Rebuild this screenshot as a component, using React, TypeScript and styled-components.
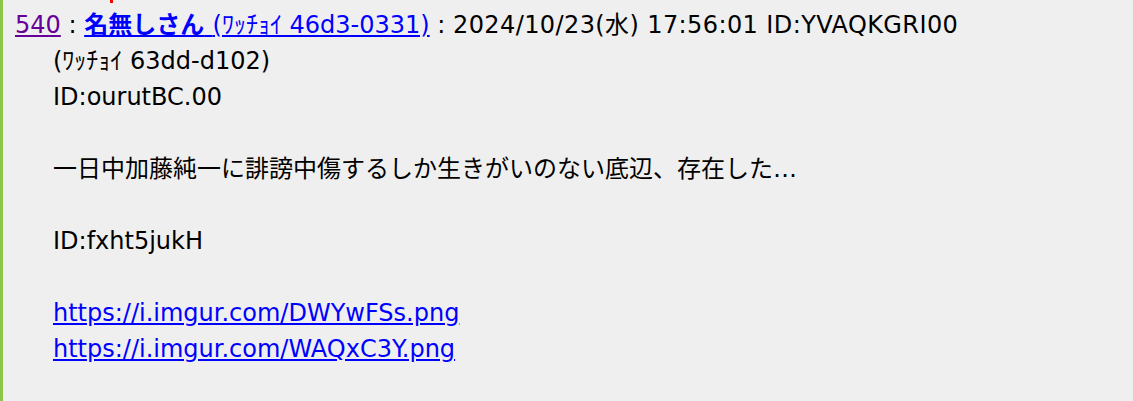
import React from 'react';
import styled, { createGlobalStyle } from 'styled-components';

const GlobalStyle = createGlobalStyle`
  html, body {
    margin: 0;
    padding: 0;
    background: #efefef;
  }
  body {
    font-family: "DejaVu Sans", "Noto Sans CJK JP", sans-serif;
    font-size: 24px;
    line-height: 36px;
    color: #000;
  }
`;

const post = {
  num: 540,
  name: '名無しさん',
  trip: '(ﾜｯﾁｮｲ 46d3-0331)',
  date: '2024/10/23(水) 17:56:01',
  id: 'YVAQKGRI00',
  lines: [
    '(ﾜｯﾁｮｲ 63dd-d102)',
    'ID:ourutBC.00',
    '',
    '一日中加藤純一に誹謗中傷するしか生きがいのない底辺、存在した…',
    '',
    'ID:fxht5jukH',
    '',
  ],
  links: ['https://i.imgur.com/DWYwFSs.png', 'https://i.imgur.com/WAQxC3Y.png'],
};

function App() {
  return (
    <>
      <GlobalStyle />
      <Page>
        <Post>
          <PrevTail />
          <Header>
            <NumLink href="#">{post.num}</NumLink>
            <Sep> : </Sep>
            <NameLink href="#">
              <b>{post.name} </b>
              {post.trip}
            </NameLink>
            <Sep> : </Sep>
            <DateText>
              {post.date} ID:{post.id}
            </DateText>
          </Header>
          <Body>
            {post.lines.map((line, key) => (
              <Line key={key}>{line || '\u00a0'}</Line>
            ))}
            {post.links.map((url, key) => (
              <Line key={'l' + key}>
                <UrlLink href="#">{url}</UrlLink>
              </Line>
            ))}
          </Body>
        </Post>
      </Page>
    </>
  );
}
export default App;

const Page = styled.div`
  height: 401px;
  overflow: hidden;
`;

const Post = styled.div`
  border-left: 3px solid #8dc549;
  padding-left: 12px;
  height: 401px;
  box-sizing: border-box;
`;

const PrevTail = styled.div`
  height: 3px;
  width: 3px;
  margin-left: 95px;
  background: #f00;
`;

const Header = styled.div`
  white-space: nowrap;
  margin-top: 4px;
`;

const NumLink = styled.a`
  color: #660099;
  text-decoration: underline;
`;

const Sep = styled.span`
  white-space: pre;
`;

const NameLink = styled.a`
  color: #0000ff;
  text-decoration: underline;
  & > b {
    font-weight: bold;
  }
`;

const DateText = styled.span`
  letter-spacing: 0.4px;
`;

const Body = styled.div`
  margin-left: 38px;
`;

const Line = styled.div`
  white-space: nowrap;
`;

const UrlLink = styled.a`
  color: #0000ff;
  text-decoration: underline;
`;
